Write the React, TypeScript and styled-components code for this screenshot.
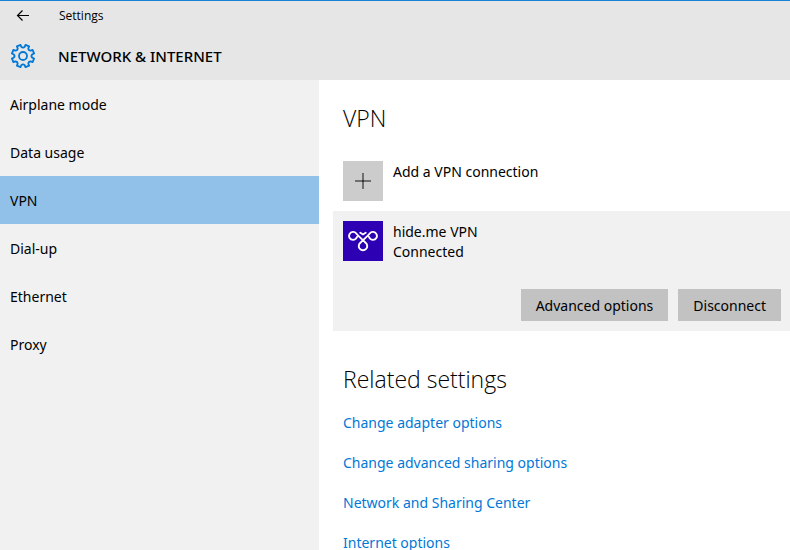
import React from "react";
import styled, { createGlobalStyle } from "styled-components";

const GlobalStyle = createGlobalStyle`
  *, *::before, *::after { box-sizing: border-box; }
  html, body, #root { height: 100%; }
  body {
    margin: 0;
    overflow: hidden;
    background: #fff;
    color: #000;
    font-family: "Noto Sans", "Open Sans", sans-serif;
    font-size: 14px;
    line-height: 20px;
  }
  h1, h2, p, ul { margin: 0; padding: 0; }
  ul { list-style: none; }
  button { font: inherit; color: inherit; border: 0; border-radius: 0; }
`;

const Window = styled.div`
  display: flex;
  flex-direction: column;
  min-height: 100%;
`;

const Header = styled.header`
  flex: none;
  background: #e6e6e6;
  border-top: 1px solid #1883d7;
`;

const TitleBar = styled.div`
  display: flex;
  align-items: center;
  height: 30px;
`;

const BackButton = styled.button`
  display: flex;
  align-items: center;
  justify-content: center;
  width: 46px;
  height: 100%;
  margin-right: 13px;
  padding: 0;
  background: transparent;
`;

const WindowTitle = styled.span`
  font-family: "Open Sans", sans-serif;
  font-size: 12px;
`;

const SectionBar = styled.div`
  display: flex;
  align-items: center;
  gap: 22px;
  height: 49px;
  padding-left: 10px;
`;

const SectionTitle = styled.h1`
  font-size: 15px;
  font-weight: 500;
`;

const Body = styled.div`
  display: flex;
  flex: 1;
`;

const Sidebar = styled.nav`
  flex: none;
  width: 319px;
  background: #f1f1f1;
`;

const NavItem = styled.button<{ $active: boolean }>`
  display: block;
  width: 100%;
  height: 48px;
  padding: 2px 10px 0;
  text-align: left;
  background: ${(p) => (p.$active ? "#91c1e9" : "transparent")};
`;

const Content = styled.main`
  flex: 1;
  min-width: 0;
  padding: 20px 0 0 14px;
`;

const Heading = styled.h2`
  padding-left: 10px;
  font-family: "Open Sans", sans-serif;
  font-size: 23px;
  line-height: 36px;
  font-weight: 300;
`;

const AddButton = styled.button`
  display: flex;
  align-items: flex-start;
  gap: 10px;
  width: 100%;
  margin-top: 15px;
  padding: 10px;
  text-align: left;
  background: transparent;
`;

const Tile = styled.span<{ $color: string }>`
  display: flex;
  flex: none;
  align-items: center;
  justify-content: center;
  width: 40px;
  height: 40px;
  background: ${(p) => p.$color};
`;

const TileLabel = styled.span`
  display: grid;
  padding-top: 1px;
`;

const Connection = styled.section`
  padding: 10px 9px 10px 10px;
  background: #f1f1f1;
`;

const ConnectionInfo = styled.div`
  display: flex;
  gap: 10px;
  height: 40px;
`;

const Actions = styled.div`
  display: flex;
  justify-content: flex-end;
  gap: 10px;
  margin-top: 28px;
`;

const ActionButton = styled.button`
  height: 32px;
  padding: 2px 15px 0;
  background: #c2c2c2;
`;

const Related = styled.section`
  margin-top: 30px;
`;

const LinkList = styled.ul`
  display: grid;
  gap: 20px;
  margin-top: 16px;
  padding-left: 10px;
`;

const SettingsLink = styled.a`
  color: #0078d7;
  text-decoration: none;
`;

const navItems = ["Airplane mode", "Data usage", "VPN", "Dial-up", "Ethernet", "Proxy"];
const links = [
  "Change adapter options",
  "Change advanced sharing options",
  "Network and Sharing Center",
  "Internet options",
];

const BackIcon = () => (
  <svg width="14" height="12" viewBox="0 0 14 12" fill="none" stroke="#000" strokeWidth="1.2" aria-hidden="true">
    <path d="M6.500 0.500 1.500 5.500l5 5M1.500 5.500H13" />
  </svg>
);

const toothAngles = Array.from({ length: 8 }, (_, i) => (i * 45 + 22.5) * (Math.PI / 180));
const gearPath =
  toothAngles
    .map((angle, i) => {
      const at = (radius: number, offset: number) => {
        const a = angle + (offset * Math.PI) / 180;
        return `${(13 + radius * Math.cos(a)).toFixed(2)} ${(13 + radius * Math.sin(a)).toFixed(2)}`;
      };
      return `${i ? "L" : "M"}${at(9.4, -12)}L${at(11.4, -10)}L${at(11.4, 10)}L${at(9.4, 12)}Q${at(7.6, 22.5)} ${at(9.4, 33)}`;
    })
    .join("") + "Z";

const GearIcon = () => (
  <svg width="26" height="26" viewBox="0 0 26 26" fill="none" stroke="#0078d7" strokeWidth="1.8" strokeLinejoin="round" aria-hidden="true">
    <path d={gearPath} />
    <circle cx="13" cy="13" r="4" />
  </svg>
);

const PlusIcon = () => (
  <svg width="16" height="16" viewBox="0 0 16 16" aria-hidden="true">
    <path d="M8 0V16M0 8H16" stroke="#707070" strokeWidth="2" />
    <path d="M7 7h2v2H7z" fill="#333" />
  </svg>
);

const HideMeIcon = () => (
  <svg width="30" height="24" viewBox="0 0 30 24" fill="none" stroke="#fff" strokeWidth="1.9" strokeLinecap="round" aria-hidden="true">
    <path d="M9 8C8.200 10 6.800 10.900 5 10.900A4 4 0 1 1 8.300 4.500C10.500 7.500 14.500 10.500 17.600 13.800A4.200 4.200 0 1 1 12.400 13.800C15.500 10.500 19.500 7.500 21.700 4.500A4 4 0 1 1 25 10.900C23.200 10.900 21.800 10 21 8" />
    <path d="M12.300 3.800 15 5.500l2.700-1.700" />
  </svg>
);

export default function App() {
  return (
    <Window>
      <GlobalStyle />
      <Header>
        <TitleBar>
          <BackButton aria-label="Back">
            <BackIcon />
          </BackButton>
          <WindowTitle>Settings</WindowTitle>
        </TitleBar>
        <SectionBar>
          <GearIcon />
          <SectionTitle>NETWORK &amp; INTERNET</SectionTitle>
        </SectionBar>
      </Header>
      <Body>
        <Sidebar>
          {navItems.map((item) => (
            <NavItem key={item} $active={item === "VPN"} aria-current={item === "VPN" ? "page" : undefined}>
              {item}
            </NavItem>
          ))}
        </Sidebar>
        <Content>
          <Heading>VPN</Heading>
          <AddButton>
            <Tile $color="#ccc">
              <PlusIcon />
            </Tile>
            <TileLabel>Add a VPN connection</TileLabel>
          </AddButton>
          <Connection>
            <ConnectionInfo>
              <Tile $color="#2d00b3">
                <HideMeIcon />
              </Tile>
              <TileLabel>
                <span>hide.me VPN</span>
                <span>Connected</span>
              </TileLabel>
            </ConnectionInfo>
            <Actions>
              <ActionButton>Advanced options</ActionButton>
              <ActionButton>Disconnect</ActionButton>
            </Actions>
          </Connection>
          <Related>
            <Heading>Related settings</Heading>
            <LinkList>
              {links.map((link) => (
                <li key={link}>
                  <SettingsLink href="#">{link}</SettingsLink>
                </li>
              ))}
            </LinkList>
          </Related>
        </Content>
      </Body>
    </Window>
  );
}
